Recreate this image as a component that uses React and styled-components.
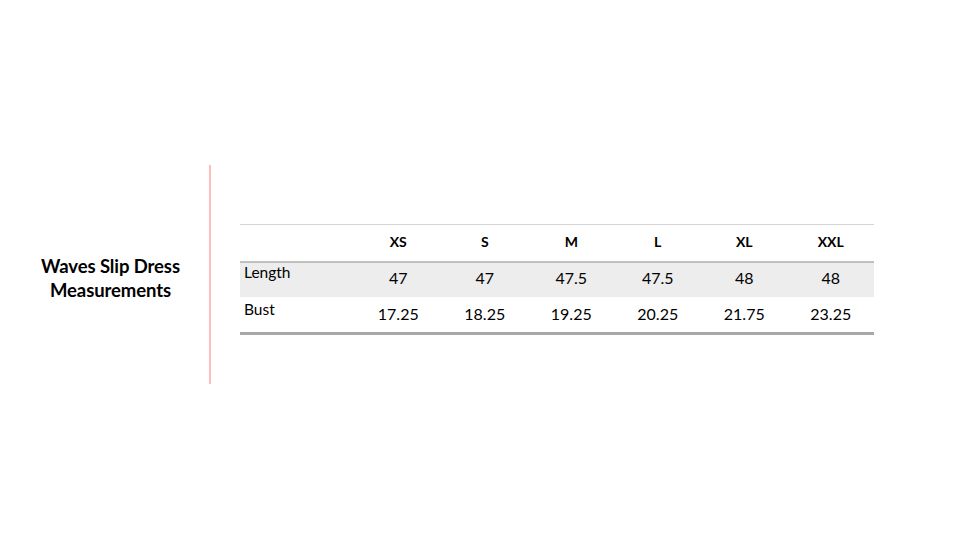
import React from "react";
import styled, { createGlobalStyle } from "styled-components";

const Global = createGlobalStyle`
  html, body { margin: 0; padding: 0; background: #fff; }
  body { font-family: Lato, "Open Sans", sans-serif; color: #000; }
`;

const Page = styled.div`
  width: 960px;
  height: 540px;
  display: flex;
  align-items: flex-start;
  padding-top: 165px;
  box-sizing: border-box;
`;

const Side = styled.div`
  width: 209px;
  height: 218px;
  display: flex;
  align-items: center;
  justify-content: center;
  padding-top: 8px;
  padding-left: 12px;
  box-sizing: border-box;
`;

const Title = styled.h1`
  margin: 0;
  font-size: 18.5px;
  font-weight: 700;
  line-height: 24px;
  text-align: center;
  letter-spacing: -0.1px;
`;

const Divider = styled.div`
  width: 2px;
  height: 219px;
  background: #ffbdb9;
`;

const TableWrap = styled.div`
  margin-left: 29px;
  margin-top: 59px;
`;

const Table = styled.table`
  width: 634px;
  border-collapse: collapse;
  border-top: 1px solid #d4d4d4;
  border-bottom: 3px solid #a8a8a8;
  table-layout: fixed;
`;

const HeadRow = styled.tr`
  height: 37px;
  border-bottom: 2px solid #c0c0c0;
`;

const Row = styled.tr`
  height: ${(p) => (p.$shaded ? "35px" : "37px")};
  background: ${(p) => (p.$shaded ? "#ededed" : "transparent")};
`;

const HeadCell = styled.th`
  font-size: 14px;
  font-weight: 700;
  text-align: center;
  vertical-align: middle;
  padding: 0 0 3px 0;
`;

const LabelCell = styled.td`
  font-size: 15.5px;
  text-align: left;
  vertical-align: top;
  padding: ${(p) => (p.$shaded ? "0" : "3px")} 0 0 4px;
`;

const ValueCell = styled.td`
  font-size: 16px;
  text-align: center;
  vertical-align: top;
  padding: ${(p) => (p.$shaded ? "5px" : "7px")} 0 0 0;
`;

const sizes = ["XS", "S", "M", "L", "XL", "XXL"];
const rows = [
  { label: "Length", values: ["47", "47", "47.5", "47.5", "48", "48"], shaded: true },
  { label: "Bust", values: ["17.25", "18.25", "19.25", "20.25", "21.75", "23.25"], shaded: false },
];

export default function App() {
  return (
    <>
      <Global />
      <Page>
        <Side>
          <Title>
            Waves Slip Dress
            <br />
            Measurements
          </Title>
        </Side>
        <Divider />
        <TableWrap>
          <Table>
            <colgroup>
              <col style={{ width: "115px" }} />
              {sizes.map((s) => (
                <col key={s} />
              ))}
            </colgroup>
            <thead>
              <HeadRow>
                <HeadCell />
                {sizes.map((s) => (
                  <HeadCell key={s}>{s}</HeadCell>
                ))}
              </HeadRow>
            </thead>
            <tbody>
              {rows.map((r) => (
                <Row key={r.label} $shaded={r.shaded}>
                  <LabelCell $shaded={r.shaded}>{r.label}</LabelCell>
                  {r.values.map((v, i) => (
                    <ValueCell key={i} $shaded={r.shaded}>
                      {v}
                    </ValueCell>
                  ))}
                </Row>
              ))}
            </tbody>
          </Table>
        </TableWrap>
      </Page>
    </>
  );
}
